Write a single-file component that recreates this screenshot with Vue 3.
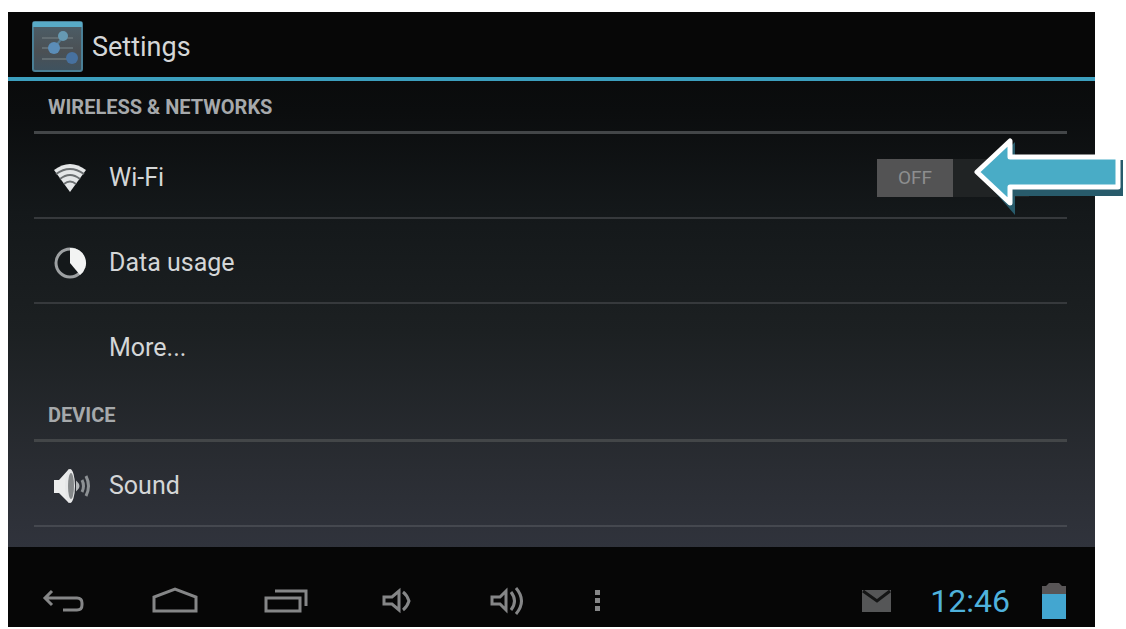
<script setup>
import { ref } from 'vue'

const wifiOn = ref(false)
</script>

<template>
  <div class="page">
    <div class="device">
      <header class="title-bar">
        <svg class="app-icon" width="52" height="52" viewBox="0 0 52 52" aria-hidden="true">
          <defs>
            <linearGradient id="tile" x1="0" y1="0" x2="0" y2="1">
              <stop offset="0" stop-color="#4c5f69" />
              <stop offset="0.6" stop-color="#4b5054" />
              <stop offset="1" stop-color="#3e525f" />
            </linearGradient>
          </defs>
          <rect x="1" y="1" width="49" height="49" rx="2" fill="url(#tile)" stroke="#4a7f96" stroke-width="2" />
          <path d="M1 1h49v5H1z" fill="#58abc7" />
          <path d="M10 17h31M10 27h31M10 38h31" stroke="#626d72" stroke-width="2" />
          <path d="M22 27 31 16" stroke="#557b91" stroke-width="2" />
          <circle cx="31" cy="15" r="5" fill="#6699b2" />
          <circle cx="22" cy="27" r="6" fill="#5b8db8" />
          <circle cx="40" cy="37" r="6" fill="#47719f" />
        </svg>
        <h1>Settings</h1>
      </header>

      <main class="content">
        <section>
          <h2>WIRELESS &amp; NETWORKS</h2>
          <ul>
            <li class="row">
              <svg class="row-icon" width="36" height="36" viewBox="0 0 36 36" aria-hidden="true">
                <path d="M1 10Q17-2 33 10L17 32Z" fill="#e4e6e7" />
                <path d="M3 14Q17 4 31 14M7 19Q17 11 27 19M11 24Q17 19 23 24" fill="none" stroke="#6b6f71" stroke-width="2" />
              </svg>
              <span id="wifi-label" class="label">Wi-Fi</span>
              <button
                class="switch"
                :class="{ on: wifiOn }"
                type="button"
                role="switch"
                :aria-checked="wifiOn"
                aria-labelledby="wifi-label"
                @click="wifiOn = !wifiOn"
              >
                <span class="thumb">{{ wifiOn ? 'ON' : 'OFF' }}</span>
              </button>
              <svg class="arrow" width="152" height="80" viewBox="0 0 152 80" aria-hidden="true">
                <path d="M9 38 43 77V58H151V22H140L43 24V4Z" fill="#285b6b" />
                <path d="M5 34 38 3V19H146V49H38V65Z" fill="#49acc6" stroke="#fff" stroke-width="5" stroke-linejoin="round" />
              </svg>
            </li>
            <li class="row">
              <svg class="row-icon" width="36" height="36" viewBox="0 0 36 36" aria-hidden="true">
                <circle cx="17" cy="18" r="14" fill="#14181a" stroke="#9da0a2" stroke-width="3" />
                <path d="M17 3A15 15 0 0 1 27 30L17 18Z" fill="#f2f3f3" />
              </svg>
              <span class="label">Data usage</span>
            </li>
            <li class="row">
              <span class="row-icon"></span>
              <span class="label">More...</span>
            </li>
          </ul>
        </section>

        <section>
          <h2>DEVICE</h2>
          <ul>
            <li class="row">
              <svg class="row-icon" width="40" height="36" viewBox="0 0 40 36" aria-hidden="true">
                <path d="M3 12h5L18 1V35L8 25H3Z" fill="#eceded" />
                <ellipse cx="19" cy="18" rx="5" ry="17" fill="#e6e7e8" />
                <ellipse cx="20" cy="18" rx="3" ry="13" fill="#85888a" />
                <path d="M26 15q3 3 0 6z" fill="#b5b8ba" stroke="#b5b8ba" stroke-width="2" />
                <path d="M31 12q3 6 0 12M35 8q5 10 0 20" fill="none" stroke="#8d9194" stroke-width="3" />
              </svg>
              <span class="label">Sound</span>
            </li>
          </ul>
        </section>
      </main>

      <footer class="system-bar">
        <nav class="keys" aria-label="System">
          <button type="button" aria-label="Back">
            <svg width="44" height="30" viewBox="0 0 44 30">
              <path d="M10 5 3 12l7 7M3 12h32q5 0 5 5v2q0 5-5 5H21" />
            </svg>
          </button>
          <button type="button" aria-label="Home">
            <svg width="46" height="30" viewBox="0 0 46 30">
              <path d="M2 25V11L23 3l21 8V25Z" />
            </svg>
          </button>
          <button type="button" aria-label="Recent apps">
            <svg width="44" height="30" viewBox="0 0 44 30">
              <path d="M2 12h34v13H2ZM11 5h31v15" />
            </svg>
          </button>
          <button type="button" aria-label="Volume down">
            <svg width="30" height="30" viewBox="0 0 30 30">
              <path d="M2 11h8l7-6v19l-7-6H2Z" />
              <path d="M21 6q4 3 6 9-2 6-6 9" />
            </svg>
          </button>
          <button type="button" aria-label="Volume up">
            <svg width="36" height="30" viewBox="0 0 36 30">
              <path d="M2 11h8l6-6v19l-6-6H2Z" />
              <path d="M21 6q7 9 0 18M26 2q11 13 0 26" />
            </svg>
          </button>
          <button class="menu-key" type="button" aria-label="Menu">
            <svg width="8" height="30" viewBox="0 0 8 30">
              <path class="solid" d="M1 4h5v5H1zM1 12h5v5H1zM1 20h5v5H1z" />
            </svg>
          </button>
        </nav>
        <div class="status">
          <svg width="30" height="26" viewBox="0 0 30 26" aria-hidden="true">
            <path d="M0 2h29v22H0Z" fill="#555657" />
            <path d="M1 3 15 13 28 3" fill="none" stroke="#141515" stroke-width="3" />
          </svg>
          <time>12:46</time>
          <svg width="24" height="38" viewBox="0 0 24 38" aria-hidden="true">
            <path d="M0 4h4l3-3h10l3 3h4v8H0Z" fill="#585556" />
            <path d="M0 12h24v25H0Z" fill="#43a6d0" />
          </svg>
        </div>
      </footer>
    </div>
  </div>
</template>

<style>
body {
  margin: 0;
  background: #fff;
}
</style>

<style scoped>
.page {
  padding: 12px 31px 1px 8px;
  font-family: Roboto, "Noto Sans", sans-serif;
  color: #d4d6d7;
}

.device {
  background: linear-gradient(#070707 0, #0b0d0e 100px, #14181a 200px, #1c2022 320px, #2a2d33 460px, #30333c 536px);
}

.title-bar {
  display: flex;
  align-items: center;
  gap: 8px;
  height: 61px;
  padding: 4px 24px 0;
  border-bottom: 4px solid #3c9fbe;
  background: #070707;
}

h1 {
  margin: 0;
  font-size: 27px;
  font-weight: 400;
  line-height: 32px;
}

.content {
  padding: 0 28px 20px 26px;
}

h2 {
  margin: 0;
  padding: 14px 14px 12px;
  border-bottom: 3px solid #434648;
  font-size: 20px;
  font-weight: 700;
  line-height: 24px;
  color: #a6a9ab;
}

ul {
  margin: 0;
  padding: 0;
  list-style: none;
}

.row {
  position: relative;
  display: flex;
  align-items: center;
  height: 85px;
  padding: 4px 0 0 17px;
  border-bottom: 2px solid #36393c;
  box-sizing: border-box;
}

.row:last-child {
  border-bottom-color: transparent;
}

section:last-child .row {
  border-bottom-color: #45484f;
}

.row-icon {
  flex: none;
  width: 40px;
  margin-right: 18px;
}

.label {
  flex: 1;
  font-size: 25px;
  line-height: 32px;
}

.switch {
  display: flex;
  width: 152px;
  height: 38px;
  margin-right: 38px;
  padding: 0;
  border: 0;
  background: #202324;
  font-family: inherit;
}

.switch.on {
  justify-content: flex-end;
}

.thumb {
  width: 76px;
  background: #535354;
  color: #8d8e8f;
  font-size: 19px;
  line-height: 38px;
  text-align: center;
}

.arrow {
  position: absolute;
  top: 4px;
  right: -57px;
  pointer-events: none;
}

.system-bar {
  display: flex;
  justify-content: space-between;
  align-items: center;
  height: 52px;
  padding-top: 28px;
  background: #060606;
}

.keys {
  display: flex;
}

.keys button {
  display: flex;
  justify-content: center;
  width: 111px;
  padding: 0;
  border: 0;
  background: none;
}

.keys .menu-key {
  width: 70px;
}

.keys path {
  fill: none;
  stroke: #858687;
  stroke-width: 3;
}

.keys .solid {
  fill: #858687;
  stroke: none;
}

.status {
  display: flex;
  align-items: center;
  gap: 32px;
  padding-right: 29px;
}

time {
  margin-left: 6px;
  font-size: 32px;
  line-height: 36px;
  color: #4fb2dc;
}
</style>
